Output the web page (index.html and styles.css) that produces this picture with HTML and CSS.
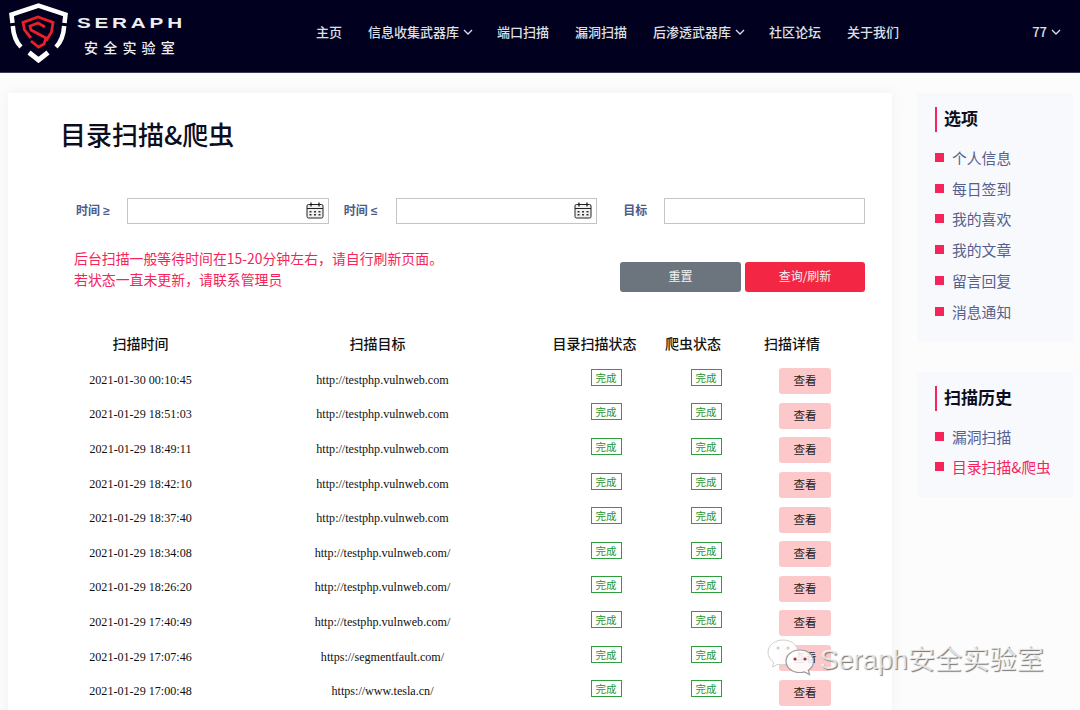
FILE: index.html
```html
<!DOCTYPE html>
<html lang="zh">
<head>
<meta charset="utf-8">
<title>目录扫描&amp;爬虫</title>
<link rel="stylesheet" href="styles.css">
</head>
<body>
<header class="topbar">
  <a class="brand">
    <svg class="brand-mark" width="60" height="60" viewBox="0 0 60 60">
      <g fill="none" stroke="#fff" stroke-width="4.500" stroke-linejoin="miter">
        <path d="M3.500 20 L2.500 11.500 L29.500 2.500 L56.500 11.500 L55.500 20"/>
        <path d="M3.800 23 C4.500 33 7 39 12 44"/>
        <path d="M55.200 23 C54.500 33 52 39 47 44"/>
        <path d="M20 49.500 L29.500 57 L39 49.500" stroke-width="5"/>
      </g>
      <g fill="none" stroke="#ea2027" stroke-width="2.800">
        <path d="M22 35 L15.500 27 L14 19.500 L29 14 L44 19.500 L42.500 29 L37 38"/>
        <path d="M36 24 L29 20 L21 23 L22 27 L37 35 L35 41 L29.500 44 L22 38"/>
      </g>
    </svg>
    <span class="brand-text">
      <span class="brand-name">SERAPH</span>
      <span class="brand-sub">安全实验室</span>
    </span>
  </a>
  <nav class="nav">
    <a>主页</a>
    <a class="has-menu">信息收集武器库<svg class="chev" viewBox="0 0 10 6"><path d="M1 1l4 4 4-4"/></svg></a>
    <a>端口扫描</a>
    <a>漏洞扫描</a>
    <a class="has-menu">后渗透武器库<svg class="chev" viewBox="0 0 10 6"><path d="M1 1l4 4 4-4"/></svg></a>
    <a>社区论坛</a>
    <a>关于我们</a>
  </nav>
  <a class="user">77<svg class="chev" viewBox="0 0 10 6"><path d="M1 1l4 4 4-4"/></svg></a>
</header>

<div class="page">
  <main class="panel">
    <h1 class="title">目录扫描&amp;爬虫</h1>

    <form class="filters">
      <label class="f-label f-first">时间 ≥</label>
      <div class="f-input f-date"><svg class="cal" width="18" height="17" viewBox="0 0 18 17"><rect x="1" y="2.500" width="16" height="13.500" rx="1.500" fill="#f0f0f0" stroke="#222"/><path d="M1 6.500h16" stroke="#222"/><path d="M5 0.500v4M13 0.500v4" stroke="#111" stroke-width="1.200"/><path d="M3.500 9h2v1.500h-2zM8 9h2v1.500h-2zM12.500 9h2v1.500h-2zM3.500 12h2v1.500h-2zM8 12h2v1.500h-2zM12.500 12h2v1.500h-2z" fill="#333"/></svg></div>
      <label class="f-label f-second">时间 ≤</label>
      <div class="f-input f-date"><svg class="cal" width="18" height="17" viewBox="0 0 18 17"><rect x="1" y="2.500" width="16" height="13.500" rx="1.500" fill="#f0f0f0" stroke="#222"/><path d="M1 6.500h16" stroke="#222"/><path d="M5 0.500v4M13 0.500v4" stroke="#111" stroke-width="1.200"/><path d="M3.500 9h2v1.500h-2zM8 9h2v1.500h-2zM12.500 9h2v1.500h-2zM3.500 12h2v1.500h-2zM8 12h2v1.500h-2zM12.500 12h2v1.500h-2z" fill="#333"/></svg></div>
      <label class="f-label f-third">目标</label>
      <div class="f-input f-target"></div>
    </form>

    <div class="notice-row">
      <p class="notice">后台扫描一般等待时间在15-20分钟左右，请自行刷新页面。<br>若状态一直未更新，请联系管理员</p>
      <div class="actions">
        <button class="btn btn-grey" type="button">重置</button>
        <button class="btn btn-red" type="button">查询/刷新</button>
      </div>
    </div>

    <div class="grid">
      <div class="row head"><div>扫描时间</div><div class="h2">扫描目标</div><div class="h3">目录扫描状态</div><div class="h4">爬虫状态</div><div class="h5">扫描详情</div></div>
      <div class="row"><div>2021-01-30 00:10:45</div><div>http://testphp.vulnweb.com</div><div><span class="tag">完成</span></div><div><span class="tag">完成</span></div><div><a class="view">查看</a></div></div>
      <div class="row"><div>2021-01-29 18:51:03</div><div>http://testphp.vulnweb.com</div><div><span class="tag">完成</span></div><div><span class="tag">完成</span></div><div><a class="view">查看</a></div></div>
      <div class="row"><div>2021-01-29 18:49:11</div><div>http://testphp.vulnweb.com</div><div><span class="tag">完成</span></div><div><span class="tag">完成</span></div><div><a class="view">查看</a></div></div>
      <div class="row"><div>2021-01-29 18:42:10</div><div>http://testphp.vulnweb.com</div><div><span class="tag">完成</span></div><div><span class="tag">完成</span></div><div><a class="view">查看</a></div></div>
      <div class="row"><div>2021-01-29 18:37:40</div><div>http://testphp.vulnweb.com</div><div><span class="tag">完成</span></div><div><span class="tag">完成</span></div><div><a class="view">查看</a></div></div>
      <div class="row"><div>2021-01-29 18:34:08</div><div>http://testphp.vulnweb.com/</div><div><span class="tag">完成</span></div><div><span class="tag">完成</span></div><div><a class="view">查看</a></div></div>
      <div class="row"><div>2021-01-29 18:26:20</div><div>http://testphp.vulnweb.com/</div><div><span class="tag">完成</span></div><div><span class="tag">完成</span></div><div><a class="view">查看</a></div></div>
      <div class="row"><div>2021-01-29 17:40:49</div><div>http://testphp.vulnweb.com/</div><div><span class="tag">完成</span></div><div><span class="tag">完成</span></div><div><a class="view">查看</a></div></div>
      <div class="row"><div>2021-01-29 17:07:46</div><div>https://segmentfault.com/</div><div><span class="tag">完成</span></div><div><span class="tag">完成</span></div><div><a class="view">查看</a></div></div>
      <div class="row"><div>2021-01-29 17:00:48</div><div>https://www.tesla.cn/</div><div><span class="tag">完成</span></div><div><span class="tag">完成</span></div><div><a class="view">查看</a></div></div>
    </div>
  </main>

  <aside class="side">
    <section class="side-card">
      <h2 class="side-title">选项</h2>
      <ul class="side-list">
        <li>个人信息</li>
        <li>每日签到</li>
        <li>我的喜欢</li>
        <li>我的文章</li>
        <li>留言回复</li>
        <li>消息通知</li>
      </ul>
    </section>
    <section class="side-card">
      <h2 class="side-title">扫描历史</h2>
      <ul class="side-list">
        <li>漏洞扫描</li>
        <li class="active">目录扫描&amp;爬虫</li>
      </ul>
    </section>
  </aside>
</div>

<div class="watermark">
  <svg class="wm-icon" width="52" height="42" viewBox="0 0 52 42">
    <path d="M16 1C7.500 1 1 6.500 1 13.500c0 4 2.300 7.500 5.800 9.800L5.500 28l5.500-2.800c1.500.4 3.200.6 5 .6 8.500 0 15-5.500 15-12.300C31 6.500 24.500 1 16 1z" fill="#fff" fill-opacity=".92" stroke="#cfcfcf"/>
    <path d="M33 11c-8 0-14 5-14 11.200S25 33.500 33 33.500c1.600 0 3.100-.2 4.500-.6l5 2.700-1.200-4.400c3.200-2 5.200-5.200 5.200-8.800C46.500 16 41 11 33 11z" fill="#fff" fill-opacity=".88" stroke="#9a9a9a" stroke-width="1.200"/>
    <circle cx="11" cy="9" r="1.500" fill="#ccc"/><circle cx="21" cy="9" r="1.500" fill="#ccc"/>
    <circle cx="28" cy="20" r="1.600" fill="#a33"/><circle cx="38" cy="20" r="1.600" fill="#a33"/>
  </svg>
  <span class="wm-text">Seraph安全实验室</span>
</div>
</body>
</html>
```
FILE: styles.css
```css
* { box-sizing: border-box; }
html, body { margin: 0; height: 710px; overflow: hidden; }
body {
  position: relative;
  background: #fcfcfd;
  font-family: "Noto Sans CJK SC", "Liberation Sans", sans-serif;
  color: #111;
}
a { color: inherit; text-decoration: none; }

/* top bar */
.topbar {
  height: 73px;
  background: #01001e;
  border-bottom: 1px solid #3a3a55;
  display: flex;
  align-items: center;
  color: #dfe0e6;
  padding: 0 19px 9px 9px;
}
.brand { display: flex; align-items: center; width: 307px; padding-top: 9px; }
.brand-mark { flex: none; margin-top: -6px; }
.brand-text { display: flex; flex-direction: column; align-items: center; margin-left: 8px; width: 106px; color: #eeeef2; }
.brand-name {
  font: bold 18px/18px "Liberation Sans", sans-serif;
  letter-spacing: 3.300px;
  margin-right: -3.300px;
  transform: scale(1.15, .85);
  margin-top: -2px;
}
.brand-sub { font-size: 14px; line-height: 20px; letter-spacing: 5.200px; margin: 5px -2px 0 2px; font-weight: 500; white-space: nowrap; }
.nav { display: flex; gap: 26px; flex: 1; font-size: 13px; font-weight: 500; }
.has-menu { display: flex; align-items: center; margin-right: -2px; }
.chev { width: 10px; height: 6px; margin-left: 4px; fill: none; stroke: #dfe0e6; stroke-width: 1.300; }
.user { display: flex; align-items: center; font-size: 13px; font-weight: 500; }

/* page */
.page { display: flex; align-items: flex-start; gap: 25px; padding: 20px 7px 0 8px; }
.panel {
  width: 884px;
  flex: none;
  background: #fff;
  box-shadow: 0 0 14px rgba(30, 30, 70, .05);
  padding: 19px 27px 20px 54px;
}
.title { margin: 0 0 0 -2px; font-size: 26px; line-height: 44px; font-weight: 500; color: #0d0d20; }

.filters { display: flex; align-items: center; margin-top: 42px; padding-left: 14px; }
.f-label { font: 700 12px "Liberation Sans", "Noto Sans CJK SC", sans-serif; color: #4e5a8a; margin-bottom: 3px; }
.f-first { width: 51px; }
.f-second { width: 52px; margin-left: 15px; }
.f-third { width: 41px; margin-left: 26px; }
.f-input {
  height: 26px;
  background: #fff;
  border: 1px solid #c4c4c4;
  display: flex;
  align-items: center;
  justify-content: flex-end;
  padding: 0 4px 2px 0;
}
.f-date { width: 202px; }
.f-target { width: 201px; }

.notice-row { display: flex; justify-content: space-between; align-items: flex-end; margin-top: 24px; padding-left: 12px; width: 803px; }
.notice { margin: 0; font-size: 13.900px; line-height: 21px; color: #f5245a; }
.actions { display: flex; gap: 4px; margin-bottom: -2px; }
.btn {
  width: 121px;
  height: 30px;
  border: 0;
  border-radius: 3px;
  color: #f2f2f2;
  font: 12px "Noto Sans CJK SC", sans-serif;
  padding: 0 0 3px;
}
.btn-grey { background: #6c757d; }
.btn-red { background: #f32643; width: 120px; }

/* table */
.grid { margin-top: 35px; font: 12.100px "Liberation Serif", serif; color: #111; width: 802px; }
.row {
  display: grid;
  grid-template-columns: 157px 327px 120px 80px 118px;
  align-items: center;
  text-align: center;
  height: 34.600px;
}
.head { font: 500 14px "Noto Sans CJK SC", sans-serif; height: 36px; margin-bottom: 2px; white-space: nowrap; }
.h2 { padding-right: 10px; }
.h3 { padding-right: 23px; }
.h4 { margin-left: -26px; }
.h5 { padding-right: 26px; }
.tag {
  display: inline-block;
  width: 31px;
  height: 17px;
  border: 1px solid #2f9e3f;
  font: 400 10.500px/15px "Noto Sans CJK SC", sans-serif;
  color: #23962f;
  position: relative;
  top: -3px;
}
.view {
  display: block;
  position: relative;
  top: 1px;
  width: 52px;
  height: 26px;
  margin: 0 auto;
  background: #fcc8ca;
  border-radius: 3px;
  font: 400 11.500px/24px "Noto Sans CJK SC", sans-serif;
  color: #222;
}

/* sidebar */
.side { width: 156px; flex: none; display: flex; flex-direction: column; gap: 30px; }
.side-card { background: #f8f9fc; padding: 14px 17px 15px 18px; }
.side-title {
  margin: 0 0 10px;
  border-left: 2px solid #f5245a;
  padding: 0 0 3px 7px;
  font-size: 17px;
  line-height: 22px;
  font-weight: 700;
  color: #0d0d20;
}
.side-list { list-style: none; margin: 0; padding: 0; }
.side-list li {
  display: flex;
  align-items: center;
  height: 30.800px;
  font-size: 14.800px;
  white-space: nowrap;
  color: #56608c;
}
.side-list li::before {
  content: "";
  width: 9px;
  height: 9px;
  margin-right: 8px;
  background: #f5245a;
  flex: none;
}
.side-list .active { color: #f5245a; }

/* watermark over the page */
.watermark { position: absolute; left: 767px; top: 639px; display: flex; align-items: center; pointer-events: none; }
.wm-text {
  margin-left: 1px;
  font-size: 27.200px;
  line-height: 36px;
  color: rgba(255, 255, 255, .75);
  text-shadow: 1px 1px 1px #777;
  font-family: "Liberation Sans", "Noto Sans CJK SC", sans-serif;
  font-weight: 400;
  white-space: nowrap;
}
```
